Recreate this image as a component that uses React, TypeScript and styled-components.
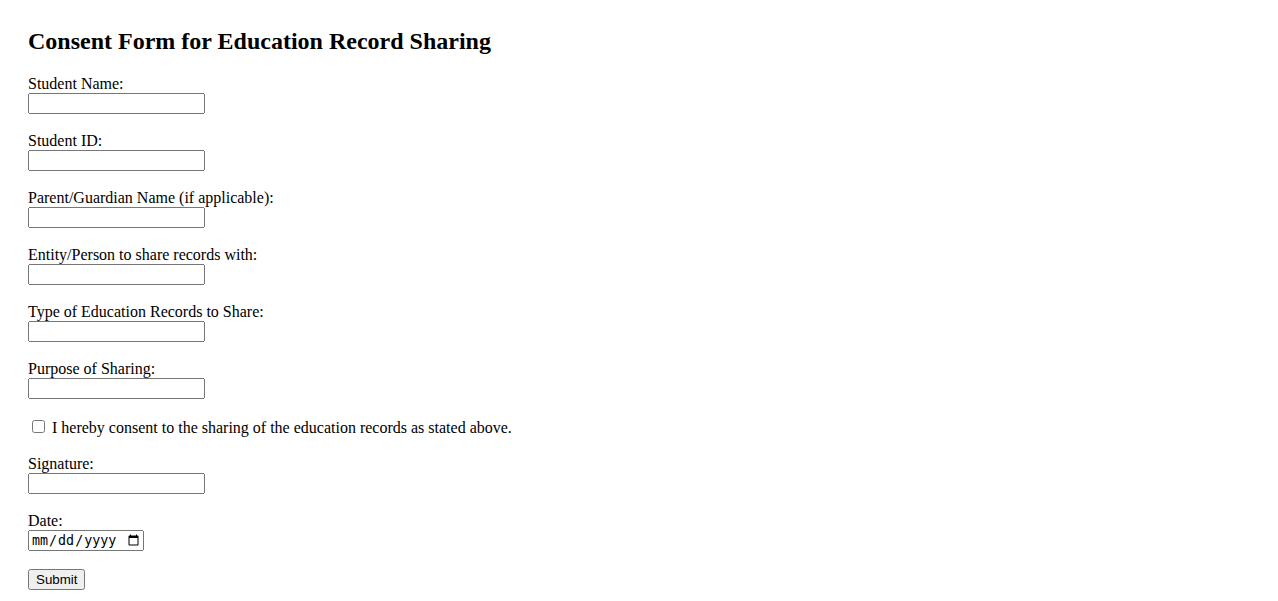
import React, { useState } from 'react';
import styled, { createGlobalStyle } from 'styled-components';

const GlobalStyle = createGlobalStyle`
  body {
    margin: 8px;
    padding: 20px;
    font-family: "Liberation Serif", "Times New Roman", serif;
    font-size: 16px;
    color: #000;
    background: #fff;
  }
`;

const Title = styled.h2`
  font-size: 24px;
  font-weight: bold;
  margin: 0 0 19.92px;
`;

const FieldGroup = styled.div`
  margin-bottom: 18px;
`;

const Label = styled.label`
  display: block;
`;

const CheckLabel = styled.label`
  display: inline;
`;

const TextInput = styled.input<{ $narrow?: boolean }>`
  box-sizing: border-box;
  width: ${(p) => (p.$narrow ? '116px' : '177px')};
  height: 21px;
  margin: 0;
`;

const Submit = styled.button`
  font-family: Arial, "Liberation Sans", sans-serif;
  font-size: 13.33px;
  height: 21px;
  padding: 1px 6px;
`;

interface FieldProps {
  id: string;
  label: string;
  type?: string;
}

const Field: React.FC<FieldProps> = ({ id, label, type = 'text' }) => (
  <FieldGroup>
    <Label htmlFor={id}>{label}</Label>
    <TextInput type={type} id={id} name={id} $narrow={type === 'date'} />
  </FieldGroup>
);

const App: React.FC = () => {
  const [agreed, setAgreed] = useState(false);

  return (
    <>
      <GlobalStyle />
      <Title>Consent Form for Education Record Sharing</Title>
      <form onSubmit={(e) => e.preventDefault()}>
        <Field id="studentName" label="Student Name:" />
        <Field id="studentId" label="Student ID:" />
        <Field id="guardianName" label="Parent/Guardian Name (if applicable):" />
        <Field id="entity" label="Entity/Person to share records with:" />
        <Field id="recordType" label="Type of Education Records to Share:" />
        <Field id="purpose" label="Purpose of Sharing:" />
        <FieldGroup>
          <input
            type="checkbox"
            id="consent"
            checked={agreed}
            onChange={() => setAgreed(!agreed)}
          />{' '}
          <CheckLabel htmlFor="consent">
            I hereby consent to the sharing of the education records as stated
            above.
          </CheckLabel>
        </FieldGroup>
        <Field id="signature" label="Signature:" />
        <Field id="date" label="Date:" type="date" />
        <Submit type="submit">Submit</Submit>
      </form>
    </>
  );
};

export default App;
